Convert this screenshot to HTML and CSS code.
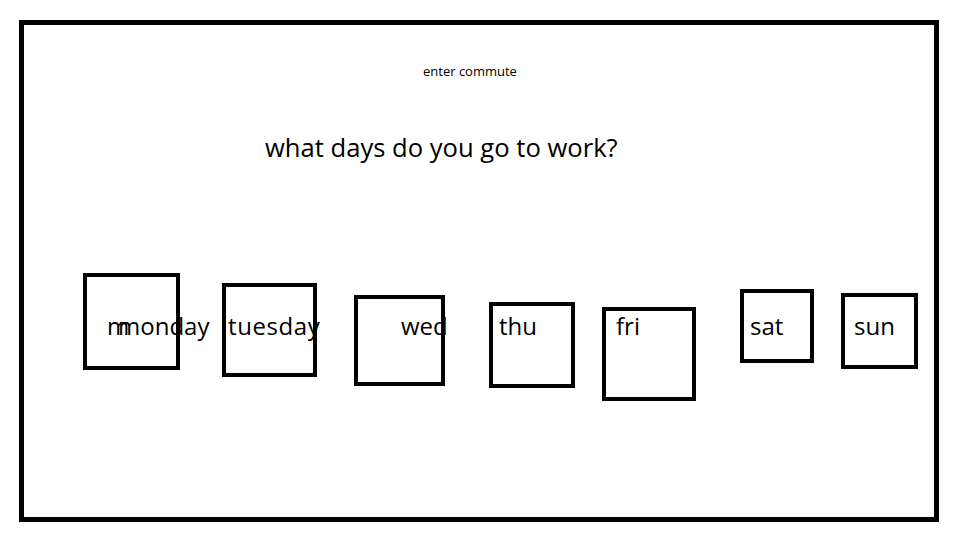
FILE: index.html
```html
<!DOCTYPE html>
<html lang="en">
<head>
<meta charset="utf-8">
<title>enter commute</title>
<link rel="stylesheet" href="styles.css">
</head>
<body>
<main class="frame">
  <header class="head">
    <p class="app-title">enter commute</p>
    <h1 class="question">what days do you go to work?</h1>
  </header>
  <section class="sketch" aria-label="work days">
    <span class="day day-ghost" aria-hidden="true">m</span>
    <span class="day day-mon">monday</span>
    <span class="day day-tue">tuesday</span>
    <span class="day day-wed">wed</span>
    <span class="day day-thu">thu</span>
    <span class="day day-fri">fri</span>
    <span class="day day-sat">sat</span>
    <span class="day day-sun">sun</span>
    <div class="box box-mon"></div>
    <div class="box box-tue"></div>
    <div class="box box-wed"></div>
    <div class="box box-thu"></div>
    <div class="box box-fri"></div>
    <div class="box box-sat"></div>
    <div class="box box-sun"></div>
  </section>
</main>
</body>
</html>
```
FILE: styles.css
```css
html, body {
  margin: 0;
  padding: 0;
  background: #fff;
}

body {
  font-family: "Open Sans", "Noto Sans", sans-serif;
  color: #000;
}

.frame {
  box-sizing: border-box;
  width: 920px;
  height: 502px;
  margin: 20px 0 0 19px;
  border: 5px solid #000;
  position: relative;
  display: flex;
  flex-direction: column;
}

.head {
  display: flex;
  flex-direction: column;
}

.app-title {
  margin: 0;
  padding: 38px 0 0 399px;
  font-size: 13px;
  line-height: 16px;
  font-weight: 400;
}

.question {
  margin: 0;
  padding: 54px 0 0 241px;
  font-size: 25.6px;
  line-height: 30px;
  font-weight: 400;
}

.sketch {
  position: relative;
  flex: 1;
}

.box {
  position: absolute;
  z-index: 1;
  box-sizing: border-box;
  border: 4px solid #000;
}

/* free-canvas offsets, relative to the sketch area */
.box-mon { left: 59px;  top: 110px; width: 97px; height: 97px; }
.box-tue { left: 198px; top: 120px; width: 95px; height: 94px; }
.box-wed { left: 330px; top: 132px; width: 91px; height: 91px; }
.box-thu { left: 465px; top: 139px; width: 86px; height: 86px; }
.box-fri { left: 578px; top: 144px; width: 94px; height: 94px; }
.box-sat { left: 716px; top: 126px; width: 74px; height: 74px; }
.box-sun { left: 817px; top: 130px; width: 77px; height: 76px; }

.day {
  position: absolute;
  top: 151px;
  font-size: 24px;
  line-height: 24px;
  white-space: nowrap;
}

.day-ghost { left: 83px; }
.day-mon { left: 94px; }
.day-tue { left: 204px; letter-spacing: 0.6px; }
.day-wed { left: 377px; }
.day-thu { left: 475px; }
.day-fri { left: 592px; }
.day-sat { left: 726px; }
.day-sun { left: 830px; }
```
